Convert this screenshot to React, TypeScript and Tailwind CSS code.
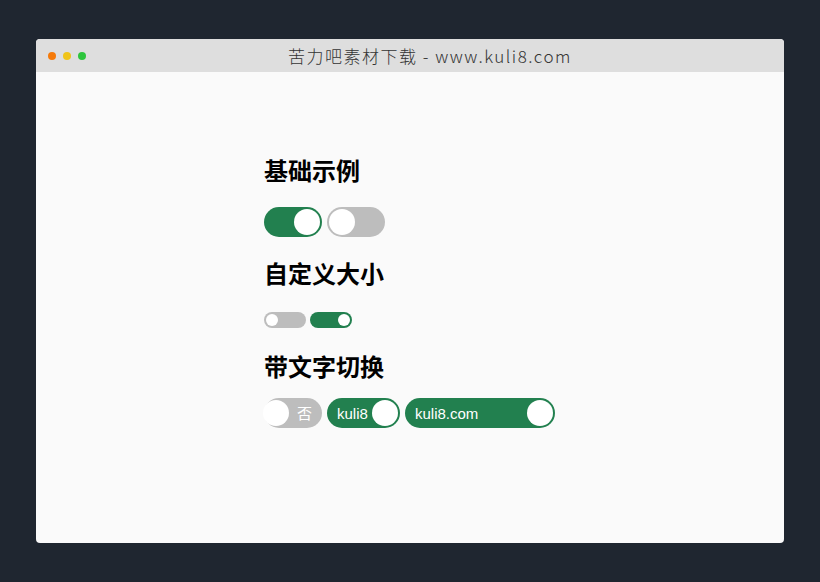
import React from 'react';

const GREEN = 'bg-[#22804f]';

interface SwitchProps {
  on: boolean;
  size?: 'md' | 'sm';
  width?: string;
  label?: string;
}

const Switch: React.FC<SwitchProps> = ({ on, size = 'md', width, label }) => {
  if (size === 'sm') {
    return (
      <div
        className={`flex h-[16px] w-[42px] items-center rounded-full px-[2px] ${
          on ? `${GREEN} justify-end` : 'bg-[#bdbdbd] justify-start'
        }`}
      >
        <div className="h-[12px] w-[12px] rounded-full bg-white" />
      </div>
    );
  }
  return (
    <div
      className={`flex h-[30px] items-center rounded-full px-[2px] ${width ?? 'w-[58px]'} ${
        on ? `${GREEN} flex-row` : 'bg-[#bdbdbd] flex-row-reverse'
      }`}
    >
      <span className="flex-1 pl-[8px] text-[15px] leading-none text-white">
        {on ? label : <span className="block pr-[8px] text-right">{label}</span>}
      </span>
      <div className="h-[26px] w-[26px] shrink-0 rounded-full bg-white" />
    </div>
  );
};

export default function App() {
  return (
    <div className="min-h-[582px] w-full bg-[#1f2630] pt-[39px] font-['Noto_Sans_CJK_SC',sans-serif]">
      <div className="mx-[36px] h-[504px] overflow-hidden rounded-[4px] bg-[#fafafa]">
        <div className="relative flex h-[33px] items-center bg-[#dedede]">
          <div className="flex gap-[7px] pl-[12px]">
            <span className="h-[8px] w-[8px] rounded-full bg-[#f57a0a]" />
            <span className="h-[8px] w-[8px] rounded-full bg-[#f0c419]" />
            <span className="h-[8px] w-[8px] rounded-full bg-[#2ec53d]" />
          </div>
          <div className="absolute inset-0 flex items-center justify-center pl-[40px] text-[17px] font-light tracking-[1.5px] text-[#333]">
            苦力吧素材下载 - www.kuli8.com
          </div>
        </div>
        <div className="flex flex-col pl-[228px] pt-[85px] font-['Liberation_Sans','Noto_Sans_CJK_SC',sans-serif]">
          <h2 className="text-[24px] font-bold leading-[30px] text-black">基础示例</h2>
          <div className="mt-[20px] flex gap-[5px]">
            <Switch on />
            <Switch on={false} />
          </div>
          <h2 className="mt-[23px] text-[24px] font-bold leading-[30px] text-black">自定义大小</h2>
          <div className="mt-[22px] flex gap-[4px]">
            <Switch on={false} size="sm" />
            <Switch on size="sm" />
          </div>
          <h2 className="mt-[25px] text-[24px] font-bold leading-[30px] text-black">带文字切换</h2>
          <div className="mt-[15px] flex gap-[5px]">
            <Switch on={false} label="否" />
            <Switch on label="kuli8" width="w-[73px]" />
            <Switch on label="kuli8.com" width="w-[150px]" />
          </div>
        </div>
      </div>
    </div>
  );
}
